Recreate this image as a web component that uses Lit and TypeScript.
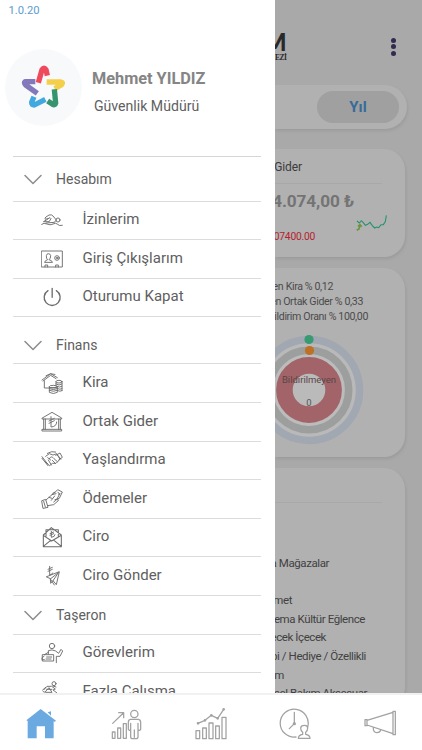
import { LitElement, html, svg, css, SVGTemplateResult } from "lit";
import { customElement } from "lit/decorators.js";

type Item = { label: string; icon: string; h: number };
type Group = { label: string; h: number; shift: number; items: Item[] };

const icons: Record<string, SVGTemplateResult> = {
  swim: svg`<path d="M2 46Q9 40 18 45T36 45T50 46T64 49M8 38L24 38M9 37Q18 33 23 28L13 31Q10 27 15 24L24 18Q33 16 36 21L46 33L41 39M23 28Q28 23 30 29L25 37M15 42L40 40"/><circle cx="51" cy="33" r="6"/>`,
  badge: svg`<path d="M2 9H64V57H2ZM11 42Q12 37 20 35Q15 32 16 23Q17 17 22 17Q28 17 29 23Q29 32 24 35Q33 37 34 42Z"/><circle cx="48" cy="30" r="7"/><circle cx="48" cy="30" r="2.500"/><path d="M12 57V51H20V57M44 57V51H52V57"/>`,
  power: svg`<path stroke-width="4" d="M21 14A24 24 0 1 0 46 14M33.500 7V34"/>`,
  kira: svg`<path d="M3 24L29 5L49 17M6 27L29 10L45 20M10 26V48H24M15 11Q29 1 42 7"/><ellipse cx="54" cy="29" rx="9" ry="4"/><path d="M45 29V42M63 29V56M45 36Q54 43 63 36M48 43Q56 48 63 43M50 50Q57 54 63 50M50 56Q57 60 63 56"/><ellipse cx="37" cy="44" rx="12" ry="4"/><path d="M25 44V61Q37 68 49 61V44M25 50Q37 56 49 50M25 55Q37 61 49 55M26 47H47"/>`,
  bank: svg`<path d="M4 21L33 4L62 21V24H4ZM8 24V55M13 24V55M53 24V55M58 24V55M4 55H62V60H4ZM30 17V48Q47 47 47 33M24 30L40 22M24 37L40 29"/>`,
  shake: svg`<path d="M3 23L20 45L26 50L34 43L45 43L57 31L47 14L36 18L25 14L14 22M3 28L21 50M20 45L12 38M25 29Q31 18 39 29L49 38M34 34L43 43M44 19L57 12L64 25L53 33M48 17L60 30M19 13Q32 5 44 9M29 33L20 26M22 33L31 48"/>`,
  hand: svg`<path d="M3 38L14 34L21 58L7 61ZM8 40L13 57M15 36L33 20L45 17M20 53L38 50L52 38Q54 34 47 35L38 42M31 37L41 24M42 35L55 31L64 12L50 5L37 18M51 13Q57 14 54 20M33 20Q36 12 42 12M48 33L57 16M24 28L33 31"/>`,
  mail: svg`<path stroke-width="3.200" d="M7 27L31 5L61 27V62H7ZM15 31V11H52V31M7 28L32 45L61 28M7 61L29 43M61 61L39 43"/><path d="M31 16V34Q42 33 42 26M27 23L38 18M27 28L38 23"/>`,
  plane: svg`<path d="M17 35L55 20L46 59L36 47L29 55L28 42ZM28 42L53 22L36 47M28 42L40 60M26 4V30Q34 29 35 24M21 13L34 7M21 19L34 13"/>`,
  task: svg`<circle cx="33" cy="12" r="8"/><path d="M22 36V26Q33 21 44 27L53 34L60 22L65 27L57 43L46 43V62M5 38H38V57H5ZM9 43L3 47V53H10M17 45H32M15 51H30M22 31L10 38"/>`,
  work: svg`<circle cx="39" cy="8" r="6"/><path d="M9 26L18 16H32L43 24L36 27L47 35M5 27L14 19M17 25H33M14 31L24 20L33 34H14M6 31Q13 37 14 31M45 18L36 15"/>`,
};

const groups: Group[] = [
  { label: "Hesabım", h: 44.5, shift: 1, items: [
    { label: "İzinlerim", icon: "swim", h: 38.5 },
    { label: "Giriş Çıkışlarım", icon: "badge", h: 38.5 },
    { label: "Oturumu Kapat", icon: "power", h: 38.5 }] },
  { label: "Finans", h: 47, shift: 10, items: [
    { label: "Kira", icon: "kira", h: 39 },
    { label: "Ortak Gider", icon: "bank", h: 38.5 },
    { label: "Yaşlandırma", icon: "shake", h: 38.5 },
    { label: "Ödemeler", icon: "hand", h: 38.5 },
    { label: "Ciro", icon: "mail", h: 38.5 },
    { label: "Ciro Gönder", icon: "plane", h: 38.5 }] },
  { label: "Taşeron", h: 39, shift: 1, items: [
    { label: "Görevlerim", icon: "task", h: 38.5 },
    { label: "Fazla Çalışma", icon: "work", h: 38.5 }] },
];

@customElement("menu-drawer")
export class MenuDrawer extends LitElement {
  static styles = css`
    :host { display: block; background: #fff; height: 693px; overflow: hidden; color: #606060; }
    .version { height: 18px; padding: 3px 0 0 8.5px; box-sizing: content-box; font-size: 11.2px; line-height: 15px; height: 17px; color: #5c9ccf; }
    .profile { display: flex; align-items: center; height: 134px; gap: 10px; padding-left: 5px; box-sizing: border-box; }
    .avatar { width: 77px; height: 77px; border-radius: 50%; background: #f8f9fb; flex: none; }
    .avatar svg { display: block; }
    .who { padding-top: 10px; }
    .name { font-size: 16.3px; font-weight: 700; line-height: 20px; color: #858585; white-space: nowrap; }
    .role { font-size: 14.1px; line-height: 20px; padding: 7px 0 0 2px; color: #606060; white-space: nowrap; }
    .menu { margin: 2px 14px 0 13px; border-top: 1px solid #d6d6d6; }
    .row { display: flex; align-items: center; box-sizing: border-box; border-bottom: 1.5px solid #dcdcdc; }
    .group { padding-left: 11px; gap: 14px; font-size: 14px; }
    .item { padding-left: 28px; gap: 19.5px; font-size: 15px; }
    .item .label { margin-top: -2px; }
    .ic { flex: none; fill: none; stroke: #6c6c6c; stroke-width: 2.8; stroke-linejoin: round; stroke-linecap: round; }
    .chev { stroke: #8c8c8c; stroke-width: 1.5; }
    .label { white-space: nowrap; }
  `;
  render() {
    return html`
      <div class="version">1.0.20</div>
      <div class="profile">
        <div class="avatar">
          <svg width="77" height="77" viewBox="0 0 231 231" fill="none" stroke-width="16" stroke-linejoin="round">
            <path stroke="#ee4a5c" d="M100 101L111 62Q117 53 123 62L127 80"/>
            <path stroke="#f4cf4c" d="M125 99H168Q176 101 170 107L149 119"/>
            <path stroke="#36956f" d="M148 121L152 162Q150 170 143 166L128 156"/>
            <path stroke="#42a9e0" d="M121 151L88 168Q79 168 80 160L87 143"/>
            <path stroke="#8478bd" d="M97 133L62 108Q55 100 62 98L91 98"/>
          </svg>
        </div>
        <div class="who"><div class="name">Mehmet YILDIZ</div><div class="role">Güvenlik Müdürü</div></div>
      </div>
      <div class="menu">
        ${groups.map((g) => html`
          <div class="row group" style="height:${g.h}px;padding-top:${g.shift}px">
            <svg class="ic chev" width="18" height="11" viewBox="0 0 18 11"><path d="M1 1.500L9 9.500L17 1.500"/></svg>
            <span class="label">${g.label}</span>
          </div>
          ${g.items.map((i) => html`
            <div class="row item" style="height:${i.h}px">
              <svg class="ic" width="22" height="22" viewBox="0 0 66 66">${icons[i.icon]}</svg>
              <span class="label">${i.label}</span>
            </div>`)}
        `)}
      </div>`;
  }
}

@customElement("dash-pane")
export class DashPane extends LitElement {
  static styles = css`
    :host { display: flex; flex-direction: column; height: 693px; overflow: hidden; background: #a9a9a9; color: #484848; }
    .top { height: 85px; flex: none; display: flex; justify-content: space-between; padding: 30px 26px 0 0; box-sizing: border-box; }
    .logo { width: 11.5px; display: flex; flex-direction: column; align-items: flex-end; color: #292929; }
    .mark { font: 900 24px/23px Lato, sans-serif; }
    .sub { font: 700 7.5px/9px "Liberation Serif", serif; letter-spacing: -0.5px; }
    .dots { display: grid; gap: 1.4px; align-content: start; padding-top: 8px; }
    .dots i { width: 5px; height: 5px; border-radius: 50%; background: #302c50; }
    .card { background: #b1b1b1; border-radius: 0 21px 21px 0; box-shadow: 1px 2px 3px #9c9c9c; box-sizing: border-box; flex: none; }
    .seg { width: 132px; height: 44px; display: flex; justify-content: flex-end; align-items: center; padding-right: 8px; margin-bottom: 20px; border-radius: 0 22px 22px 0; }
    .pill { width: 82px; height: 32px; border-radius: 16px; background: #a0a0a0; color: #376b99; font-size: 15px; font-weight: 700; line-height: 32px; text-align: center; }
    .c2 { width: 130px; height: 108px; margin-bottom: 11px; }
    .c3 { width: 130px; height: 189px; margin-bottom: 11px; padding-top: 10.5px; }
    .c4 { width: 130px; height: 240px; }
    .line { display: flex; justify-content: flex-end; white-space: nowrap; }
    .title { width: 27px; height: 34px; line-height: 37px; font-size: 12px; letter-spacing: -0.1px; color: #3c3c3c; }
    .rule { width: 107px; height: 1px; background: #a8a8a8; }
    .sum { width: 79px; font-size: 17.2px; font-weight: 700; line-height: 35px; height: 31px; color: #747474; letter-spacing: -0.1px; }
    .trend { display: flex; height: 40px; justify-content: space-between; padding-right: 18px; }
    .red { width: 40px; line-height: 12px; padding-top: 16px; font-size: 10.3px; letter-spacing: -0.25px; color: #b6222e; }
    .rate { font-size: 10.6px; line-height: 15.2px; height: 15.2px; color: #4b4b4b; letter-spacing: -0.36px; }
    .ring { display: block; margin-top: 9.4px; }
    .list { padding-top: 51px; }
    .li { height: 18.6px; line-height: 18.6px; font-size: 11.5px; letter-spacing: -0.42px; color: #414141; }
    .head { height: 34px; }
  `;
  render() {
    const rates: [string, number][] = [["en Kira % 0,12", 58], ["en Ortak Gider % 0,33", 88], ["Bildirim Oranı % 100,00", 93]];
    const shops: [string, number][] = [["a Mağazalar", 54], ["", 0], ["met", 17], ["ema Kültür Eğlence", 90], ["ecek İçecek", 51], ["bi / Hediye / Özellikli", 91], ["m", 9], ["sel Bakım Aksesuar", 92]];
    return html`
      <div class="top">
        <div class="logo"><span class="mark">M</span><span class="sub">EZİ</span></div>
        <div class="dots"><i></i><i></i><i></i></div>
      </div>
      <div class="card seg"><div class="pill">Yıl</div></div>
      <div class="card c2">
        <div class="line title">Gider</div>
        <div class="rule"></div>
        <div class="line sum">4.074,00 ₺</div>
        <div class="trend">
          <div class="line red">07400.00</div>
          <svg width="32" height="18" viewBox="0 0 96 54" fill="none" stroke-width="3.200">
            <path stroke="#239270" d="M6 18L13 24L19 17L25 23L31 31L38 28L45 22L52 32L59 39L65 36L71 38L78 29L85 29L91 20L94 1"/>
            <path stroke="#6d933c" d="M5 46L12 42L15 31M9 34L15 29L20 35" stroke-width="5"/>
          </svg>
        </div>
      </div>
      <div class="card c3">
        ${rates.map(([t, w]) => html`<div class="line rate" style="width:${w}px">${t}</div>`)}
        <svg class="ring" width="100" height="116" viewBox="275 333 100 116">
          <circle cx="309" cy="390" r="50.500" fill="#b9b9b9" stroke="#a1a8b1" stroke-width="7.500"/>
          <circle cx="309" cy="390" r="39.700" fill="#bcbcbc" stroke="#9d9e9e" stroke-width="7.600"/>
          <circle cx="309" cy="390" r="24.600" fill="#bababa" stroke="#a26468" stroke-width="16.600"/>
          <circle cx="309" cy="339.500" r="4.600" fill="#379a70"/>
          <circle cx="309.500" cy="350.500" r="4.600" fill="#bd7026"/>
          <text x="309" y="382.500" text-anchor="middle" font-size="9.500" fill="#5a4447">Bildirilmeyen</text>
          <text x="309" y="405.500" text-anchor="middle" font-size="9.500" fill="#555">0</text>
        </svg>
      </div>
      <div class="card c4">
        <div class="head"></div>
        <div class="rule"></div>
        <div class="list">${shops.map(([t, w]) => html`<div class="line li" style="width:${w}px">${t}</div>`)}</div>
      </div>`;
  }
}

@customElement("app-root")
export class AppRoot extends LitElement {
  static styles = css`
    :host { display: block; width: 422px; height: 750px; overflow: hidden; background: #fff; font-family: Roboto, "Noto Sans", sans-serif; }
    .body { display: grid; grid-template-columns: 275px 147px; height: 693px; }
    .nav { display: grid; grid-template-columns: repeat(5, 1fr); height: 57px; box-sizing: border-box; border-top: 2px solid #f1f1f1; background: #fff; justify-items: center; padding-top: 13px; }
    .nav svg { fill: none; stroke: #a2a2a2; stroke-width: 3.8; stroke-linejoin: round; stroke-linecap: round; }
    .nav .home { fill: #6aaae0; stroke: none; }
  `;
  render() {
    return html`
      <div class="body"><menu-drawer></menu-drawer><dash-pane></dash-pane></div>
      <div class="nav">
        <svg class="home" width="32" height="32" viewBox="0 0 96 96"><path d="M44 3L90 38L86 42L83 39V91H57V55H32V91H5V39L1 37ZM65 13L75 10V23Z"/></svg>
        <svg width="32" height="32" viewBox="0 0 96 96"><path d="M4 72H12V91H4ZM20 60H29V91H20ZM37 47H46V91H37ZM5 46L37 15M23 14H38V29"/><circle cx="70" cy="18" r="11"/><path d="M58 34H82Q89 35 89 43V64Q85 70 81 64V87Q81 92 75 92H65Q59 92 59 87V64Q55 70 52 64V43Q52 35 58 34ZM59 46V64M81 46V64M70 66V88"/></svg>
        <svg width="32" height="32" viewBox="0 0 96 96"><path d="M3 68H14V92H3ZM23 60H34V92H23ZM42 45H54V92H42ZM62 54H73V92H62ZM81 28H93V92H81ZM9 46L30 37L49 22L68 31L86 4"/><g fill="#a2a2a2"><circle cx="9" cy="46" r="2"/><circle cx="30" cy="37" r="2"/><circle cx="49" cy="22" r="2"/><circle cx="68" cy="31" r="2"/><circle cx="86" cy="4" r="2"/></g></svg>
        <svg width="32" height="32" viewBox="0 0 96 96"><path d="M51 87A42 42 0 1 1 86 57M46 13V44M43 50L31 62"/><circle cx="46" cy="47" r="3" fill="#a2a2a2"/><path d="M58 91Q58 81 71 79V73Q65 69 65 60Q66 52 76 52Q86 52 86 60Q86 69 80 73V79Q93 81 93 91Z"/></svg>
        <svg width="32" height="32" viewBox="0 0 96 96"><path d="M3 35H9V53H3ZM9 37L87 13M9 51L87 77M87 10H94V80H87ZM28 59Q27 73 38 74Q49 74 50 65"/></svg>
      </div>`;
  }
}
